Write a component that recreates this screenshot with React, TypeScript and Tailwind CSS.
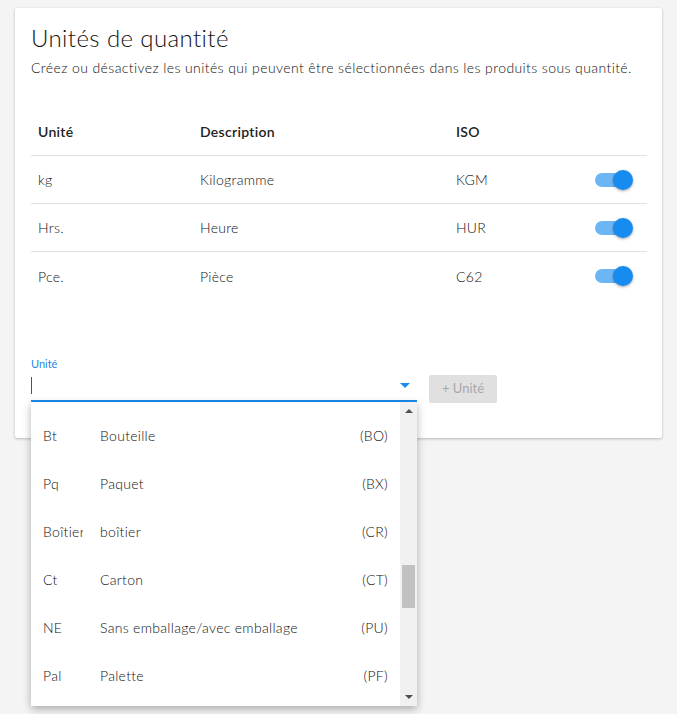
import { useState } from "react";

const UNITS = [
  { code: "kg", description: "Kilogramme", iso: "KGM" },
  { code: "Hrs.", description: "Heure", iso: "HUR" },
  { code: "Pce.", description: "Pièce", iso: "C62" },
];

const OPTIONS = [
  { code: "Bt", description: "Bouteille", iso: "BO" },
  { code: "Pq", description: "Paquet", iso: "BX" },
  { code: "Boîtier", description: "boîtier", iso: "CR" },
  { code: "Ct", description: "Carton", iso: "CT" },
  { code: "NE", description: "Sans emballage/avec emballage", iso: "PU" },
  { code: "Pal", description: "Palette", iso: "PF" },
];

function Toggle({ on, onClick }: { on: boolean; onClick: () => void }) {
  return (
    <button onClick={onClick} className="relative w-[38px] h-[20px] flex items-center">
      <span
        className={`absolute left-0 w-[34px] h-[14px] rounded-full ${on ? "bg-[#6db6f5]" : "bg-[#bdbdbd]"}`}
      />
      <span
        className={`absolute top-0 w-[20px] h-[20px] rounded-full shadow-[0_1px_3px_rgba(0,0,0,0.35)] ${
          on ? "left-[18px] bg-[#168bf0]" : "left-0 bg-[#fafafa]"
        }`}
      />
    </button>
  );
}

export default function App() {
  const [enabled, setEnabled] = useState([true, true, true]);

  return (
    <div className="min-h-[714px] bg-[#f4f4f4] pt-2 pl-[15px] pr-[15px] font-['Lato',sans-serif] font-light text-[#111]">
      <div className="relative bg-white shadow-[0_1px_3px_rgba(0,0,0,0.25)] rounded-[2px] pt-[14px] pl-4 pr-[15px] pb-[36px]">
        <h1 className="text-[24px] leading-[32px] tracking-[0.4px] text-[#111]">Unités de quantité</h1>
        <p className="mt-1 text-[14px] leading-[20px] tracking-[0.4px]">
          Créez ou désactivez les unités qui peuvent être sélectionnées dans les produits sous quantité.
        </p>

        {/* Tableau */}
        <div className="mt-[30px] text-[14px] tracking-[0.3px]">
          <div className="grid grid-cols-[162px_256px_1fr_60px] h-[48px] items-center border-b border-[#e0e0e0] font-semibold text-[#222]">
            <span className="px-[7px]">Unité</span>
            <span className="px-[7px]">Description</span>
            <span className="px-[7px]">ISO</span>
            <span />
          </div>
          {UNITS.map((u, i) => (
            <div
              key={u.code}
              className={`grid grid-cols-[162px_256px_1fr_60px] h-[48px] items-center ${
                i < UNITS.length - 1 ? "border-b border-[#e0e0e0]" : ""
              }`}
            >
              <span className="px-[7px]">{u.code}</span>
              <span className="px-[7px]">{u.description}</span>
              <span className="px-[7px]">{u.iso}</span>
              <span className="flex justify-end pr-[14px]">
                <Toggle
                  on={enabled[i]}
                  onClick={() => setEnabled(enabled.map((v, j) => (j === i ? !v : v)))}
                />
              </span>
            </div>
          ))}
        </div>

        {/* Ajout d'unité */}
        <div className="mt-[57px] flex items-end gap-3">
          <div className="relative w-[386px]">
            <div className="text-[11px] leading-[14px] font-normal text-[#1e88e5]">Unité</div>
            <div className="h-[31px] flex items-center border-b-2 border-[#1a8cf0]">
              <span className="w-px h-[17px] bg-[#1f5f99]" />
              <span className="ml-auto mr-[7px] w-0 h-0 border-l-[5px] border-r-[5px] border-t-[5px] border-l-transparent border-r-transparent border-t-[#1a8cf0]" />
            </div>

            {/* Liste déroulante */}
            <div className="absolute z-10 left-0 top-full w-[386px] h-[304px] bg-white shadow-[0_3px_8px_rgba(0,0,0,0.3)] flex overflow-hidden">
              <div className="flex-1 pt-[9px] text-[14px] tracking-[0.3px]">
                {OPTIONS.map((o) => (
                  <div key={o.code} className="h-[48px] flex items-center pl-3 pr-3">
                    <span className="w-[40px] overflow-hidden whitespace-nowrap">{o.code}</span>
                    <span className="ml-[17px]">{o.description}</span>
                    <span className="ml-auto">({o.iso})</span>
                  </div>
                ))}
              </div>
              <div className="relative w-[17px] bg-[#f1f1f1]">
                <span className="absolute left-[5px] top-[7px] w-0 h-0 border-l-[4px] border-r-[4px] border-b-[4px] border-l-transparent border-r-transparent border-b-[#505050]" />
                <span className="absolute left-[2px] top-[163px] w-[13px] h-[43px] bg-[#c1c1c1]" />
                <span className="absolute left-[5px] bottom-[7px] w-0 h-0 border-l-[4px] border-r-[4px] border-t-[4px] border-l-transparent border-r-transparent border-t-[#505050]" />
              </div>
            </div>
          </div>
          <button
            disabled
            className="h-[28px] w-[68px] mb-[-1px] rounded-[2px] bg-[#e0e0e0] text-[13px] font-normal text-[#a8a8a8]"
          >
            + Unité
          </button>
        </div>
      </div>
    </div>
  );
}
